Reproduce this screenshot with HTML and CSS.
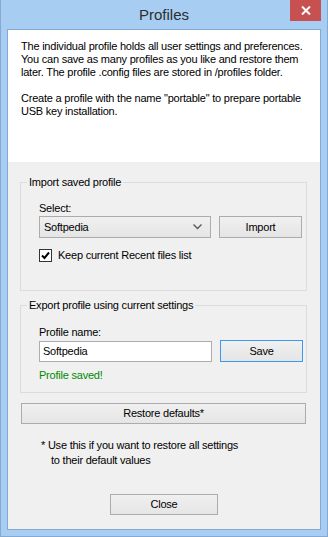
FILE: index.html
```html
<!DOCTYPE html>
<html>
<head>
<meta charset="utf-8">
<link rel="stylesheet" href="styles.css">
</head>
<body>
<div class="window">
  <div class="titlebar">
    <span class="title">Profiles</span>
    <div class="close"><svg width="10" height="9" viewBox="0 0 10 9"><path d="M1 0.5 L9 8.5 M9 0.5 L1 8.5" stroke="#fff" stroke-width="2"/></svg></div>
  </div>
  <div class="client">
    <div class="intro">
      <p>The individual profile holds all user settings and preferences.<br>You can save as many profiles as you like and restore them<br>later. The profile .config files are stored in /profiles folder.</p>
      <p>Create a profile with the name "portable" to prepare portable<br>USB key installation.</p>
    </div>
    <div class="panel">
      <fieldset class="group g1">
        <legend>Import saved profile</legend>
        <div class="label">Select:</div>
        <div class="row">
          <div class="combo"><span>Softpedia</span><svg width="9" height="6" viewBox="0 0 9 6"><path d="M0.5 0.5 L4.5 4.5 L8.5 0.5" fill="none" stroke="#5a5a5a" stroke-width="1.4"/></svg></div>
          <div class="btn">Import</div>
        </div>
        <div class="check"><span class="box"><svg width="11" height="11" viewBox="0 0 11 11"><path d="M2 5.5 L4.5 8 L9 2.5" fill="none" stroke="#000" stroke-width="2"/></svg></span><span>Keep current Recent files list</span></div>
      </fieldset>
      <fieldset class="group g2">
        <legend>Export profile using current settings</legend>
        <div class="label">Profile name:</div>
        <div class="row">
          <div class="textbox">Softpedia</div>
          <div class="btn focus">Save</div>
        </div>
        <div class="saved">Profile saved!</div>
      </fieldset>
      <div class="btn restore">Restore defaults*</div>
      <div class="note">
        <div>* Use this if you want to restore all settings</div>
        <div class="indent">to their default values</div>
      </div>
      <div class="btn closebtn">Close</div>
    </div>
  </div>
</div>
</body>
</html>
```
FILE: styles.css
```css
html, body {
  margin: 0;
  padding: 0;
}
body {
  font-family: "Liberation Sans", Arial, sans-serif;
  font-size: 11px;
  line-height: 13px;
  letter-spacing: -0.22px;
  color: #000;
}
.window {
  width: 328px;
  height: 537px;
  box-sizing: border-box;
  background: #a7cdf3;
  border: 1px solid #86a9d2;
  border-top: none;
  display: flex;
  flex-direction: column;
}
.titlebar {
  height: 29px;
  display: grid;
  grid-template-columns: 1fr auto 1fr;
  align-items: start;
}
.title {
  grid-column: 2;
  font-size: 15px;
  line-height: 18px;
  letter-spacing: 0;
  color: #2d2d2d;
  margin-top: 6px;
}
.close {
  grid-column: 3;
  justify-self: end;
  width: 31px;
  height: 21px;
  margin-right: 6px;
  background: #c75050;
  display: flex;
  align-items: center;
  justify-content: center;
}
.client {
  margin: 0 6px 6px 6px;
  border: 1px solid #86a9d2;
  flex: 1;
  display: flex;
  flex-direction: column;
  background: #f0f0f0;
}
.intro {
  background: #fff;
  height: 132px;
  box-sizing: border-box;
  padding: 10px 0 0 13px;
}
.intro p {
  margin: 0 0 13px 0;
}
.panel {
  flex: 1;
  display: flex;
  flex-direction: column;
}
.group {
  margin: 0 13px 0 12px;
  border: 1px solid #dcdcdc;
  padding: 0 0 0 18px;
  min-width: 0;
}
.group legend {
  padding: 0 2px;
  margin-left: -12px;
  line-height: 13px;
}
.g1 {
  margin-top: 14px;
  padding-top: 13px;
  padding-bottom: 28px;
}
.g2 {
  margin-top: 8px;
  padding-top: 14px;
  padding-bottom: 10px;
}
.label {
  height: 13px;
}
.row {
  display: flex;
  align-items: center;
  gap: 8px;
  height: 22px;
  margin-top: 1px;
}
.combo {
  width: 172px;
  height: 22px;
  box-sizing: border-box;
  border: 1px solid #acacac;
  background: linear-gradient(#f0f0f0, #e5e5e5);
  display: flex;
  align-items: center;
  justify-content: space-between;
  padding: 0 8px 0 4px;
}
.textbox {
  width: 173px;
  height: 21px;
  box-sizing: border-box;
  border: 1px solid #abadb3;
  background: #fff;
  padding: 3px 4px 0 3px;
}
.btn {
  box-sizing: border-box;
  border: 1px solid #acacac;
  background: linear-gradient(#f0f0f0, #e5e5e5);
  display: flex;
  align-items: center;
  justify-content: center;
  height: 22px;
}
.row .btn {
  width: 83px;
}
.btn.focus {
  border-color: #3c99f3;
}
.check {
  display: flex;
  align-items: center;
  gap: 6px;
  margin-top: 11px;
  height: 13px;
}
.box {
  width: 13px;
  height: 13px;
  box-sizing: border-box;
  border: 1px solid #333;
  background: #fff;
  display: flex;
  align-items: center;
  justify-content: center;
}
.saved {
  color: #008a00;
  margin-top: 7px;
  height: 13px;
}
.restore {
  margin: 10px 14px 0 13px;
  height: 21px;
}
.note {
  margin: 14px 0 0 33px;
  line-height: 15px;
}
.indent {
  padding-left: 10px;
}
.closebtn {
  align-self: flex-start;
  margin: 26px 0 0 102px;
  width: 108px;
  height: 21px;
}
```
